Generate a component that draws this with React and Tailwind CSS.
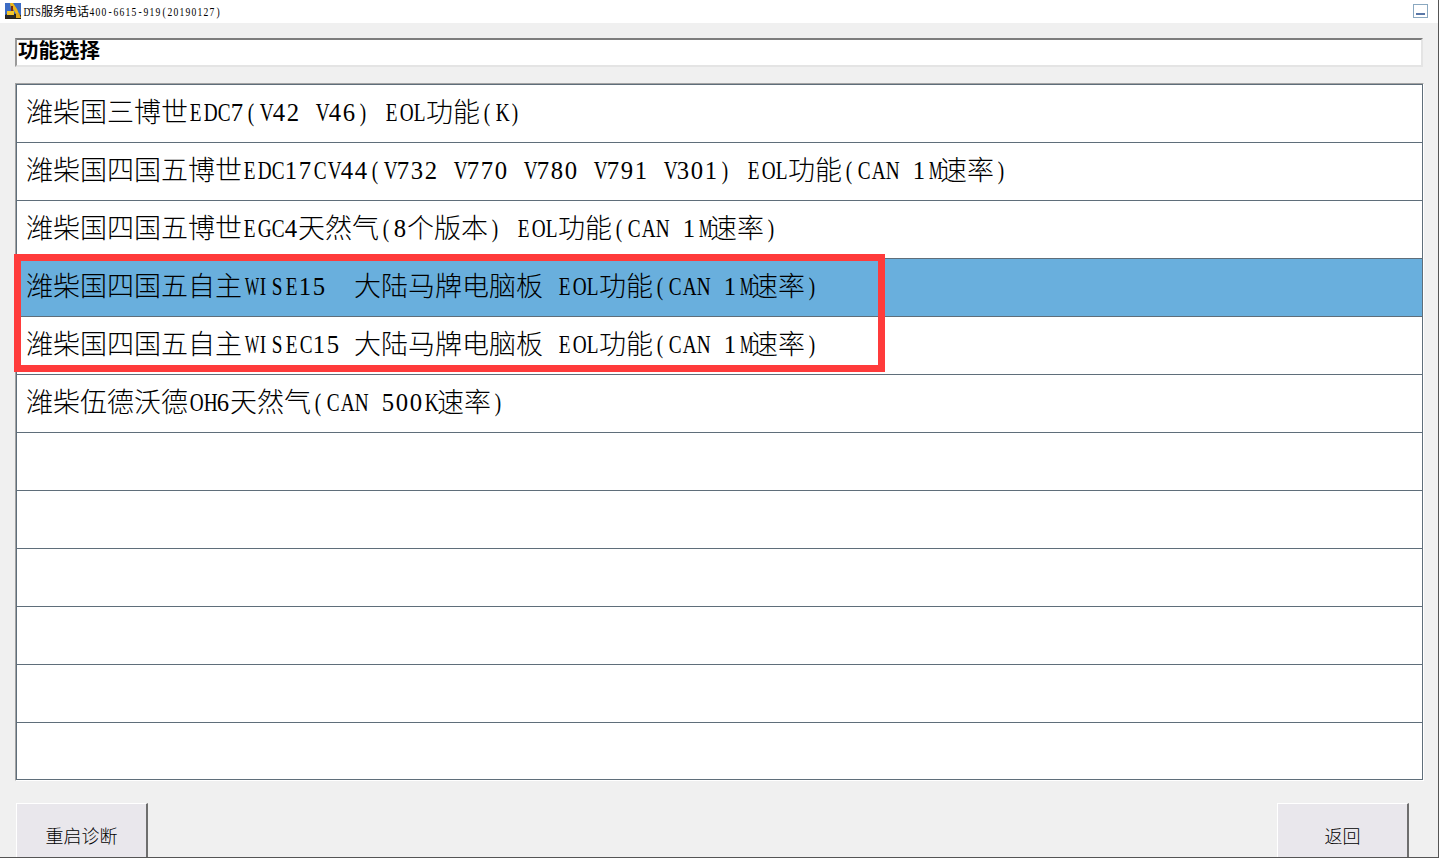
import React from 'react';

const cjk = '"Noto Sans CJK SC", sans-serif';

const rows = [
  '潍柴国三博世EDC7(V42 V46) EOL功能(K)',
  '潍柴国四国五博世EDC17CV44(V732 V770 V780 V791 V301) EOL功能(CAN 1M速率)',
  '潍柴国四国五博世EGC4天然气(8个版本) EOL功能(CAN 1M速率)',
  '潍柴国四国五自主WISE15  大陆马牌电脑板 EOL功能(CAN 1M速率)',
  '潍柴国四国五自主WISEC15 大陆马牌电脑板 EOL功能(CAN 1M速率)',
  '潍柴伍德沃德OH6天然气(CAN 500K速率)',
  '',
  '',
  '',
  '',
  '',
  '',
];

// ascii is half width in the original font, so each char gets its own cell
function Latin({ c }) {
  const base =
    "inline-block w-[14px] text-center -translate-y-[1px] font-['Liberation_Serif',serif] text-[26px] text-black";
  if (c === 'W' || c === 'M') return <span className={`${base} scale-x-[0.58]`}>{c}</span>;
  if (/[0-9]/.test(c)) return <span className={`${base} scale-x-[0.95]`}>{c}</span>;
  return <span className={`${base} scale-x-[0.74]`}>{c}</span>;
}

function RowText({ text }) {
  const parts = text.split(/([\x00-\x7f]+)/).filter(Boolean);
  return (
    <span className="whitespace-pre">
      {parts.map((p, i) =>
        /^[\x00-\x7f]/.test(p) ? (
          [...p].map((c, j) => <Latin key={`${i}-${j}`} c={c} />)
        ) : (
          <span key={i} className="font-['Noto_Sans_CJK_SC',sans-serif] text-[27px] font-light text-black">
            {p}
          </span>
        )
      )}
    </span>
  );
}

function TitleText({ text }) {
  const parts = text.split(/([\x00-\x7f]+)/).filter(Boolean);
  return (
    <span className="whitespace-pre">
      {parts.map((p, i) =>
        /^[\x00-\x7f]/.test(p) ? (
          [...p].map((c, j) => (
            <span
              key={`${i}-${j}`}
              className="inline-block w-[6px] text-center scale-x-[0.8] font-['Liberation_Serif',serif] text-[12px] text-black"
            >
              {c}
            </span>
          ))
        ) : (
          <span key={i} className="font-['Noto_Sans_CJK_SC',sans-serif] text-[12px] text-black">
            {p}
          </span>
        )
      )}
    </span>
  );
}

function Row({ text, selected, last }) {
  return (
    <div
      className={`flex items-center pl-[9px] pb-[4px] ${
        last ? 'h-[56px]' : 'h-[58px] border-b border-[#5f6e7a]'
      } ${selected ? 'bg-[#69afdd]' : 'bg-white'}`}
    >
      <RowText text={text} />
    </div>
  );
}

function AppIcon() {
  return (
    <svg width="16" height="16" viewBox="0 0 16 16" className="shrink-0">
      <rect width="16" height="16" fill="#3d6cc4" />
      <path d="M0 12l5-2 6 1 5 1v4H0z" fill="#2a2416" />
      <path d="M5 0h3l4 6 2 5h-3L8 6H6z" fill="#efb818" />
      <path d="M2 8h7v4H2z" fill="#f5c62a" />
      <path d="M6 3h2v5H6z" fill="#7a2b12" />
      <path d="M1 12h9v3H1z" fill="#2b2b2b" />
      <path d="M11 10h3l2 5h-5z" fill="#e0a81c" />
    </svg>
  );
}

function BottomButton({ children }) {
  return (
    <button
      className="w-[132px] h-[54px] bg-[#e9e7ec] border-t border-l border-r-2 border-t-white border-l-white border-r-[#6e6e6e] pt-[10px] text-[18px] font-light text-black"
      style={{ fontFamily: cjk }}
    >
      {children}
    </button>
  );
}

export default function App() {
  return (
    <div className="w-[1439px] h-[858px] flex flex-col overflow-hidden bg-[#f0f0f0] border-r border-b border-[#555]">
      <div className="h-[23px] bg-white flex items-center pl-[5px] pr-[10px] pb-[1px] shrink-0">
        <AppIcon />
        <div className="ml-[2px] leading-none -mt-[3px]">
          <TitleText text="DTS服务电话400-6615-919(20190127)" />
        </div>
        <div className="ml-auto w-[15px] h-[14px] border border-[#8aa8c0] flex items-end justify-center pb-[2px]">
          <div className="w-[9px] h-[2px] bg-[#5a78a8]" />
        </div>
      </div>

      <div className="flex-1 flex flex-col pl-[15px] pr-[15px] pt-[15px] min-h-0">
        <div className="w-[1408px] h-[29px] bg-white border-t-2 border-l-2 border-r-2 border-b-2 border-t-[#7d7d7d] border-l-[#9a9a9a] border-r-[#e4e4e4] border-b-[#e4e4e4] flex items-center pl-[1px] pb-[6px]">
          <span className="text-[20.5px] font-bold text-black" style={{ fontFamily: cjk }}>
            功能选择
          </span>
        </div>

        <div className="mt-[16px] w-[1409px] border-t border-l border-r border-b border-t-[#a3a3a3] border-l-[#a3a3a3] border-r-white border-b-white">
          <div className="bg-white border border-[#5f6e7a]">
            {rows.slice(0, 3).map((t, i) => (
              <Row key={i} text={t} />
            ))}
            <div className="relative">
              <Row text={rows[3]} selected />
              <Row text={rows[4]} />
              <div className="absolute -left-[3px] -top-[5px] w-[871px] h-[118px] border-[7px] border-[#ff3b3b] pointer-events-none" />
            </div>
            {rows.slice(5).map((t, i) => (
              <Row key={i} text={t} last={i === 6} />
            ))}
          </div>
        </div>

        <div className="mt-auto flex justify-between pl-[1px] pr-[14px]">
          <BottomButton>重启诊断</BottomButton>
          <BottomButton>返回</BottomButton>
        </div>
      </div>
    </div>
  );
}
